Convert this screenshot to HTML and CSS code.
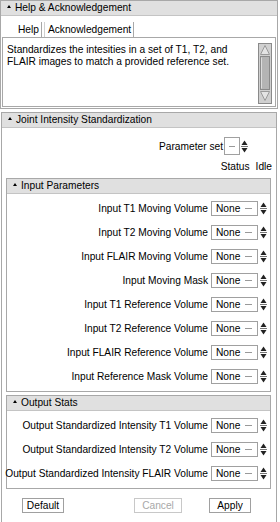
FILE: index.html
```html
<!DOCTYPE html>
<html lang="en">
<head>
    <meta charset="UTF-8">
    <title>Joint Intensity Standardization</title>
<link rel="stylesheet" href="styles.css">
</head>
<body>
    <!-- shared spin arrows -->
    <svg class="defs" width="0" height="0">
        <symbol id="spin" viewBox="0 0 7 15">
            <polygon points="0.5,6 3.5,1.5 6.5,6" fill="#222"/>
            <line x1="0" y1="7.5" x2="7" y2="7.5" stroke="#777"/>
            <polygon points="0.5,9 6.5,9 3.5,13.5" fill="#222"/>
        </symbol>
    </svg>

    <!-- Help & Acknowledgement -->
    <div class="section help">
        <div class="header"><span class="arrow"></span>Help &amp; Acknowledgement</div>
        <div class="help-body">
            <div class="tabs">
                <span class="tab active">Help</span>
                <span class="tab">Acknowledgement</span>
            </div>
            <div class="help-text">
                <p>Standardizes the intesities in a set of T1, T2, and FLAIR images to match a provided reference set.</p>
                <svg class="scrollbar" width="14" height="61" viewBox="0 0 14 61">
                    <rect x="0.5" y="0.5" width="13" height="60" fill="#d0d0d0" stroke="#8a8a8a"/>
                    <polygon points="2.5,11.5 7,2.5 11.5,11.5" fill="#e4e4e4" stroke="#9a9a9a"/>
                    <rect x="2.5" y="13.5" width="9" height="33" fill="#b4b4b4" stroke="#8a8a8a"/>
                    <line x1="3.5" y1="14.5" x2="3.5" y2="45.5" stroke="#dcdcdc"/>
                    <polygon points="2.5,48.5 11.5,48.5 7,57.5" fill="#e4e4e4" stroke="#9a9a9a"/>
                </svg>
            </div>
        </div>
    </div>

    <!-- Module -->
    <div class="section module">
        <div class="header"><span class="arrow"></span>Joint Intensity Standardization</div>
        <div class="module-body">
            <div class="row top-row">
                <span class="label">Parameter set</span>
                <span class="combo small"><span class="dash"></span></span>
                <svg class="spin"><use href="#spin"/></svg>
            </div>
            <div class="row status-row">
                <span class="label">Status</span>
                <span class="status">Idle</span>
            </div>

            <div class="section sub">
                <div class="header"><span class="arrow"></span>Input Parameters</div>
                <div class="sub-body">
                    <div class="row"><span class="label">Input T1 Moving Volume</span><span class="combo">None<span class="dash"></span></span><svg class="spin"><use href="#spin"/></svg></div>
                    <div class="row"><span class="label">Input T2 Moving Volume</span><span class="combo">None<span class="dash"></span></span><svg class="spin"><use href="#spin"/></svg></div>
                    <div class="row"><span class="label">Input FLAIR Moving Volume</span><span class="combo">None<span class="dash"></span></span><svg class="spin"><use href="#spin"/></svg></div>
                    <div class="row"><span class="label">Input Moving Mask</span><span class="combo">None<span class="dash"></span></span><svg class="spin"><use href="#spin"/></svg></div>
                    <div class="row"><span class="label">Input T1 Reference Volume</span><span class="combo">None<span class="dash"></span></span><svg class="spin"><use href="#spin"/></svg></div>
                    <div class="row"><span class="label">Input T2 Reference Volume</span><span class="combo">None<span class="dash"></span></span><svg class="spin"><use href="#spin"/></svg></div>
                    <div class="row"><span class="label">Input FLAIR Reference Volume</span><span class="combo">None<span class="dash"></span></span><svg class="spin"><use href="#spin"/></svg></div>
                    <div class="row"><span class="label">Input Reference Mask Volume</span><span class="combo">None<span class="dash"></span></span><svg class="spin"><use href="#spin"/></svg></div>
                </div>
            </div>

            <div class="section sub output">
                <div class="header"><span class="arrow"></span>Output Stats</div>
                <div class="sub-body">
                    <div class="row"><span class="label">Output Standardized Intensity T1 Volume</span><span class="combo">None<span class="dash"></span></span><svg class="spin"><use href="#spin"/></svg></div>
                    <div class="row"><span class="label">Output Standardized Intensity T2 Volume</span><span class="combo">None<span class="dash"></span></span><svg class="spin"><use href="#spin"/></svg></div>
                    <div class="row"><span class="label">Output Standardized Intensity FLAIR Volume</span><span class="combo">None<span class="dash"></span></span><svg class="spin"><use href="#spin"/></svg></div>
                </div>
            </div>

            <div class="buttons">
                <button>Default</button>
                <button class="cancel" disabled>Cancel</button>
                <button>Apply</button>
            </div>
        </div>
    </div>
</body>
</html>
```

FILE: styles.css
```css
body {
    margin: 0;
    width: 280px;
    font-family: "Liberation Sans", Arial, sans-serif;
    font-size: 10.2px;
    color: #000;
    background-color: #fff;
}

.defs {
    position: absolute;
}

.section {
    border: 1px solid #a8a8a8;
}

.header {
    height: 14px;
    line-height: 14px;
    background-color: #e0e0e0;
    border-bottom: 1px solid #c4c4c4;
    padding-left: 6px;
    display: flex;
    align-items: center;
}

/* small collapse triangle */
.arrow {
    width: 0;
    height: 0;
    border-left: 2.5px solid transparent;
    border-right: 2.5px solid transparent;
    border-bottom: 3px solid #000;
    margin: 0 4px 4px 0;
}

/* Help panel */
.help {
    margin: 0 2px 0 0;
}

.help-body {
    padding: 6px 1px 1px 1px;
}

.tabs {
    display: flex;
    padding-left: 13px;
    height: 15px;
    line-height: 15px;
}

.tab {
    padding: 0 2px 0 3px;
    border-right: 1px solid #a8a8a8;
}

.tab + .tab {
    margin-left: 2px;
    border-left: 1px solid #d0d0d0;
}

.help-text {
    display: flex;
    border: 1px solid #a8a8a8;
    height: 64px;
    padding: 4px 2px 0 4px;
}

.help-text p {
    flex: 1;
    margin: 2px 0 0 0;
    line-height: 12px;
}

.scrollbar {
    flex: none;
    margin: 1px 1px 0 0;
}

/* Module */
.module {
    margin: 3px 3px 0 1px;
    border-bottom: none;
}

.module-body {
    padding: 8px 0 0 0;
}

.row {
    display: flex;
    justify-content: flex-end;
    align-items: center;
    height: 24px;
    padding-right: 3px;
}

.label {
    margin-right: 3px;
    white-space: nowrap;
}

.top-row {
    height: 20px;
    padding-right: 28px;
}

.top-row .label {
    margin-right: 1px;
}

.top-row .spin {
    margin-left: 1px;
}

.status-row {
    height: 20px;
    padding-right: 4px;
}

.status {
    margin-left: 3px;
}

.combo {
    display: flex;
    align-items: center;
    justify-content: space-between;
    box-sizing: border-box;
    flex: none;
    width: 47px;
    height: 15px;
    padding: 0 5px 0 4px;
    border: 1px solid #a0a0a0;
    background-color: #fff;
}

.combo.small {
    width: 16px;
    height: 18px;
    justify-content: flex-end;
    padding-right: 4px;
}

.dash {
    width: 7px;
    height: 1px;
    background-color: #999;
}

.spin {
    flex: none;
    width: 7px;
    height: 15px;
    margin-left: 2px;
}

.sub {
    margin: 2px 5px 0 4px;
}

.sub-body {
    padding: 2px 0 3px 0;
}

.output {
    margin-top: 3px;
}

.output .sub-body {
    padding: 2px 0 3px 0;
}

.buttons {
    display: flex;
    padding: 9px 0 12px 20px;
}

button {
    box-sizing: border-box;
    width: 42px;
    height: 15px;
    font-family: "Liberation Sans", Arial, sans-serif;
    font-size: 10.2px;
    background-color: #fff;
    color: #000;
    border: 1px solid #a0a0a0;
    padding: 0;
}

button.cancel {
    margin: 0 27px 0 70px;
    width: 48px;
}

button:disabled {
    color: #a8a8a8;
    border-color: #c8c8c8;
}
```
